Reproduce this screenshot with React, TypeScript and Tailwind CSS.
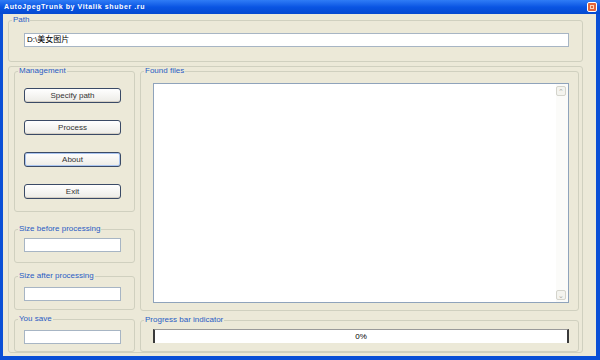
import React from 'react';

const font = { fontFamily: '"Liberation Sans", "Noto Sans CJK SC", sans-serif' };

function Group({ label, className, children }: { label: string; className: string; children?: React.ReactNode }) {
  return (
    <fieldset className={`rounded-[3px] border border-[#d0d0bf] ${className}`}>
      <legend className="ml-[3px] px-[1px] text-[8px] leading-[8px] text-[#2a5cc4]">{label}</legend>
      {children}
    </fieldset>
  );
}

function XpButton({ label, focused }: { label: string; focused?: boolean }) {
  return (
    <button
      className={`ml-[9px] flex h-[15px] w-[97px] items-center justify-center rounded-[3px] border border-[#3a4a66] bg-gradient-to-b from-white to-[#ecebe6] text-[8px] font-normal leading-none text-[#333] ${
        focused ? 'shadow-[inset_0_0_0_1px_#a9c4f0]' : 'shadow-[inset_0_-1px_0_#d6d0c5]'
      }`}
    >
      {label}
    </button>
  );
}

function Field({ mt }: { mt: string }) {
  return <div className={`${mt} ml-[9px] h-[14px] w-[97px] border border-[#a7b5c4] bg-white`} />;
}

export default function App() {
  return (
    <div className="flex h-[360px] w-[600px] flex-col bg-[#0a4fd6]" style={font}>
      {/* Title bar */}
      <div className="flex h-[14px] items-center justify-between bg-gradient-to-b from-[#2f7cf6] via-[#0a55e3] to-[#0449d0] pl-[4px] pr-[3px]">
        <span className="text-[7px] font-bold tracking-[0.6px] text-white">AutoJpegTrunk by Vitalik shuber .ru</span>
        <div className="flex h-[10px] w-[10px] items-center justify-center rounded-[2px] border border-white bg-[#e2643c]">
          <div className="h-[4px] w-[4px] border border-[#fbd3b8]" />
        </div>
      </div>

      {/* Window body */}
      <div className="mb-[4px] ml-[3px] mr-[4px] flex-1 bg-[#ece9d8] pl-[5px] pr-[13px] pt-[2px]">
        <Group label="Path" className="h-[46px] w-[575px]">
          <div className="ml-[15px] mt-[9px] flex h-[14px] w-[545px] items-center border border-[#a7b5c4] bg-white pl-[2px] text-[8px] text-black">
            D:\美女图片
          </div>
        </Group>

        <div className="mt-[4px] flex h-[287px] w-[575px] gap-[5px] rounded-[3px] border border-[#d0d0bf] pl-[5px]">
          {/* Left column */}
          <div className="flex w-[121px] flex-col">
            <Group label="Management" className="h-[145px] w-[121px]">
              <div className="mt-[13px] flex flex-col gap-[17px]">
                <XpButton label="Specify path" />
                <XpButton label="Process" />
                <XpButton label="About" focused />
                <XpButton label="Exit" />
              </div>
            </Group>
            <Group label="Size before processing" className="mt-[13px] h-[38px] w-[121px]">
              <Field mt="mt-[5px]" />
            </Group>
            <Group label="Size after processing" className="mt-[9px] h-[38px] w-[121px]">
              <Field mt="mt-[7px]" />
            </Group>
            <Group label="You save" className="mt-[5px] h-[37px] w-[121px]">
              <Field mt="mt-[7px]" />
            </Group>
          </div>

          {/* Right column */}
          <div className="flex w-[439px] flex-col">
            <Group label="Found files" className="h-[245px] w-[439px]">
              <div className="ml-[12px] mt-[8px] flex h-[220px] w-[416px] border border-[#8fa3bb] bg-white">
                <div className="flex-1" />
                <div className="flex w-[12px] flex-col justify-between bg-[#fbfbf9] py-[2px]">
                  <div className="flex h-[10px] w-[10px] items-center justify-center rounded-[2px] border border-[#d4d4cc] bg-[#f4f4ef] text-[7px] leading-none text-[#a8a8a0]">
                    ⌃
                  </div>
                  <div className="flex h-[10px] w-[10px] items-center justify-center rounded-[2px] border border-[#d4d4cc] bg-[#f4f4ef] text-[7px] leading-none text-[#a8a8a0]">
                    ⌄
                  </div>
                </div>
              </div>
            </Group>
            <Group label="Progress bar indicator" className="mt-[5px] h-[36px] w-[439px]">
              <div className="ml-[12px] mt-[5px] flex h-[14px] w-[416px] items-center justify-center border-l-2 border-r-2 border-t border-[#3a3a3a] border-t-[#9a9a9a] bg-white text-[8px] text-black">
                0%
              </div>
            </Group>
          </div>
        </div>
      </div>
    </div>
  );
}
